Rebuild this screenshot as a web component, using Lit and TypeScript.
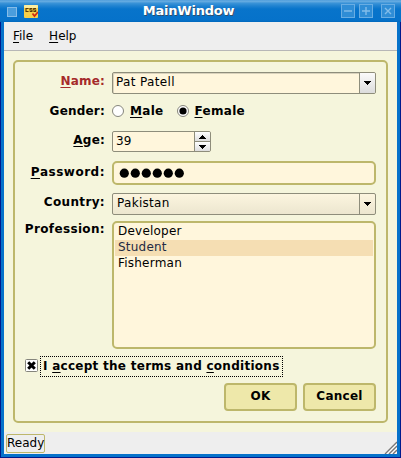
import { LitElement, html, css, svg } from "lit";
import { customElement, property, state } from "lit/decorators.js";
import { classMap } from "lit/directives/class-map.js";

/** Text with one underlined accelerator letter, marked by a leading "&". */
const mnemonic = (text: string) => {
  const at = text.indexOf("&");
  if (at < 0) return html`${text}`;
  return html`${text.slice(0, at)}<u>${text[at + 1]}</u>${text.slice(at + 2)}`;
};

const down = svg`<path d="M0 0h7v1h-1v1h-1v1h-1v1h-1v-1h-1v-1h-1v-1h-1z"/>`;

@customElement("title-bar")
class TitleBar extends LitElement {
  static styles = css`
    :host {
      display: flex;
      align-items: center;
      height: 22px;
      box-sizing: border-box;
      padding: 0 6px 0 7px;
      background: linear-gradient(#4797d8 0, #69aee3 1px, #5ba5de 2px, #3c94d8 3px, #1f82d0 6px, #0874cb 9px, #0672ca 20px, #0068bd 22px);
    }
    .box {
      width: 10px;
      height: 10px;
      box-sizing: border-box;
      margin-top: 2px;
      border: 1px solid #85bce8;
      background: #4a9ddd;
    }
    .logo { margin: 0 0 0 7px; display: block; }
    .title {
      flex: 1;
      text-align: center;
      padding-right: 2px;
      letter-spacing: -0.2px;
      font: bold 13px/20px "DejaVu Sans", sans-serif;
      color: #fff;
      text-shadow: 1px 1px 0 #30506c;
    }
    .btn { display: block; margin-right: 4px; }
    .btn.last { margin: 0 0 0 4px; }
  `;
  render() {
    const btn = (d: string, last = false) => html`
      <svg class=${classMap({ btn: true, last })} width="14" height="14" viewBox="0 0 14 14">
        <rect x=".5" y=".5" width="13" height="13" fill="#2f8dd6" stroke="#68ade3" />
        <path d=${d} stroke="#83bdea" stroke-width="1.4" fill="none" />
      </svg>`;
    return html`
      <div class="box"></div>
      <svg class="logo" width="14" height="13" viewBox="0 0 14 13">
        <rect width="14" height="13" rx="1" fill="#f7d04a" />
        <rect width="14" height="3" rx="1" fill="#fdeea0" />
        <path d="M4.600 3.500H2v3h2.600M8.300 3.500H6v1.500h2v1.500H5.700M12 3.500H9.700v1.500h2v1.500H9.400" fill="none" stroke="#5b3a08" stroke-width="1.100" />
        <path d="M8.500 8.500l2 2.500 3.500-4" fill="none" stroke="#d32a12" stroke-width="1.800" />
      </svg>
      <div class="title">MainWindow</div>
      ${btn("M3 7H11")} ${btn("M3 7H11M7 3V11")} ${btn("M4 4L10 10M10 4L4 10", true)}
    `;
  }
}

@customElement("drop-field")
class DropField extends LitElement {
  @property() value = "";
  @property({ type: Boolean }) editable = false;
  static styles = css`
    :host { display: block; }
    .field {
      display: flex;
      height: 22px;
      box-sizing: border-box;
      border: 1px solid #8e8d7b;
      border-radius: 2px;
      background: linear-gradient(#fcf5df, #ece6cf);
      overflow: hidden;
    }
    .value { flex: 1; padding-left: 4px; line-height: 19px; letter-spacing: 0.3px; }
    .arrow {
      width: 15px;
      border-left: 1px solid #8e8d7b;
      display: flex;
      align-items: center;
      justify-content: center;
    }
    .editable { background: #fff6dc; box-shadow: inset 1px 1px 0 #d9d2bc; }
    .editable .value { padding-left: 3px; letter-spacing: 0.35px; }
    .editable .arrow { background: linear-gradient(#fbfbfb, #dcdcdc); }
  `;
  render() {
    return html`<div class=${classMap({ field: true, editable: this.editable })}>
      <div class="value">${this.value}</div>
      <div class="arrow"><svg width="7" height="4">${down}</svg></div>
    </div>`;
  }
}

@customElement("app-root")
class AppRoot extends LitElement {
  @state() gender = "&Female";
  @state() profession = "Student";
  static styles = css`
    :host {
      display: flex;
      flex-direction: column;
      width: 401px;
      height: 458px;
      box-sizing: border-box;
      background: #0672ca;
      font: 12px/16px "DejaVu Sans", sans-serif;
      color: #000;
    }
    u { text-decoration: underline; text-decoration-thickness: 1px; text-underline-offset: 2px; text-decoration-skip-ink: none; }
    .frame {
      flex: 1;
      display: flex;
      flex-direction: column;
      border: 1px solid #001a8c;
      border-top: 0;
      padding: 0 3px 3px;
    }
    .menu {
      height: 28px;
      display: flex;
      gap: 16px;
      padding-left: 9px;
      line-height: 28px;
      background: #eee;
      border-bottom: 1px solid #b7b7b7;
    }
    .body { flex: 1; background: #f5f5dc; padding: 9px; display: flex; }
    .group {
      flex: 1;
      box-sizing: border-box;
      border: 2px solid #bdb76b;
      border-radius: 5px;
      padding: 10px;
    }
    .row { display: flex; gap: 7px; }
    .label { width: 80px; display: flex; justify-content: flex-end; font-weight: bold; white-space: nowrap; letter-spacing: 0.2px; }
    .field { width: 264px; }
    .required { color: #a52a2a; }
    .name { height: 22px; line-height: 19px; }
    .gender { height: 37px; line-height: 34px; }
    .options { display: flex; align-items: center; font-weight: bold; height: 34px; letter-spacing: 0.3px; }
    .radio { display: block; margin-right: 6px; }
    .option { margin-right: 13px; }
    .age { height: 21px; line-height: 19px; }
    .spin {
      display: flex;
      width: 99px;
      height: 21px;
      box-sizing: border-box;
      border: 1px solid #8e8d7b;
      border-radius: 2px;
      background: #fff6dc;
      overflow: hidden;
    }
    .number { flex: 1; padding-left: 3px; line-height: 18px; }
    .steps { width: 15px; border-left: 1px solid #8e8d7b; display: flex; flex-direction: column; }
    .step { flex: 1; display: flex; align-items: center; justify-content: center; background: linear-gradient(#fff, #dedede); }
    .step + .step { border-top: 1px solid #8e8d7b; }
    .flip { transform: scaleY(-1); }
    .password { margin-top: 9px; line-height: 23px; }
    .password .label { letter-spacing: 0.5px; }
    .secret {
      height: 24px;
      box-sizing: border-box;
      border: 2px solid #bdb76b;
      border-radius: 5px;
      background: #fff6dc;
      padding: 5px 0 0 5px;
    }
    .secret svg { display: block; }
    .country { margin-top: 8px; line-height: 19px; }
    .country .label, .profession .label { letter-spacing: 0.35px; }
    .profession { margin-top: 6px; }
    .list {
      height: 128px;
      box-sizing: border-box;
      border: 2px solid #bdb76b;
      border-radius: 5px;
      background: #fff6dc;
      padding: 1px 1px 0;
      letter-spacing: 0.22px;
    }
    .item { padding-left: 3px; height: 16px; line-height: 15px; }
    .item.selected { background: #f5deb3; color: #222a44; }
    .terms { display: flex; align-items: center; gap: 2px; margin-top: 7px; height: 21px; font-weight: bold; }
    .focus {
      border: 1px dotted #000;
      height: 19px;
      width: 239px;
      line-height: 18px;
      padding-left: 2px;
      white-space: nowrap;
      letter-spacing: 0.27px;
    }
    .check { display: block; margin-bottom: 2px; }
    .buttons { display: flex; justify-content: flex-end; gap: 6px; margin-top: 6px; }
    .button {
      width: 73px;
      height: 28px;
      box-sizing: border-box;
      border: 2px solid #bdb76b;
      border-radius: 4px;
      background: #eee8aa;
      font-weight: bold;
      line-height: 23px;
      text-align: center;
      letter-spacing: 0.25px;
    }
    .status { height: 22px; background: #eee; display: flex; justify-content: space-between; padding-left: 2px; }
    .ready {
      width: 39px;
      height: 19px;
      margin-top: 2px;
      box-sizing: border-box;
      border: 1px solid #bdb76b;
      border-radius: 2px;
      line-height: 16px;
      white-space: nowrap;
    }
    .grip { align-self: flex-end; display: block; }
  `;

  renderRadio(text: string) {
    const on = this.gender === text;
    return html`<svg class="radio" width="12" height="12" viewBox="0 0 12 12">
        <circle cx="6" cy="6" r="5.500" fill="#fff" stroke="#85857c" />
        ${on ? svg`<circle cx="6" cy="6" r="3.600"/>` : ""}
      </svg><span class="option" @click=${() => (this.gender = text)}>${mnemonic(text)}</span>`;
  }

  render() {
    return html`
      <title-bar></title-bar>
      <div class="frame">
        <div class="menu"><span>${mnemonic("&File")}</span><span>${mnemonic("&Help")}</span></div>
        <div class="body">
          <div class="group">
            <div class="row name">
              <div class="label required">${mnemonic("&Name:")}</div>
              <drop-field class="field" editable value="Pat Patell"></drop-field>
            </div>
            <div class="row gender">
              <div class="label">Gender:</div>
              <div class="options">${["&Male", "&Female"].map((g) => this.renderRadio(g))}</div>
            </div>
            <div class="row age">
              <div class="label">${mnemonic("&Age:")}</div>
              <div class="spin">
                <div class="number">39</div>
                <div class="steps">
                  <div class="step"><svg class="flip" width="7" height="4">${down}</svg></div>
                  <div class="step"><svg width="7" height="4">${down}</svg></div>
                </div>
              </div>
            </div>
            <div class="row password">
              <div class="label">${mnemonic("&Password:")}</div>
              <div class="field secret">
                <svg width="70" height="10">${[0, 1, 2, 3, 4, 5].map((i) => svg`<circle cx=${5.3 + i * 11} cy="5.200" r="4.600"/>`)}</svg>
              </div>
            </div>
            <div class="row country">
              <div class="label">Country:</div>
              <drop-field class="field" value="Pakistan"></drop-field>
            </div>
            <div class="row profession">
              <div class="label">Profession:</div>
              <div class="field list">
                ${["Developer", "Student", "Fisherman"].map(
                  (p) => html`<div class=${classMap({ item: true, selected: p === this.profession })}
                    @click=${() => (this.profession = p)}>${p}</div>`
                )}
              </div>
            </div>
            <div class="terms">
              <svg class="check" width="13" height="13" viewBox="0 0 13 13">
                <rect x=".5" y=".5" width="12" height="12" rx="1" fill="#fff" stroke="#85857c" />
                <path d="M3.200 3.200L9.800 9.800M9.800 3.200L3.200 9.800" stroke="#000" stroke-width="3" />
              </svg>
              <div class="focus">I <u>a</u>ccept the terms and <u>c</u>onditions</div>
            </div>
            <div class="buttons"><div class="button">OK</div><div class="button">Cancel</div></div>
          </div>
        </div>
        <div class="status">
          <div class="ready">Ready</div>
          <svg class="grip" width="13" height="13" viewBox="0 0 13 13">
            <path d="M1 13L13 1M5 13L13 5M9 13L13 9" stroke="#777" stroke-width="1.300" />
            <path d="M3 13L13 3M7 13L13 7M11 13L13 11" stroke="#fff" stroke-width="1" />
          </svg>
        </div>
      </div>
    `;
  }
}
